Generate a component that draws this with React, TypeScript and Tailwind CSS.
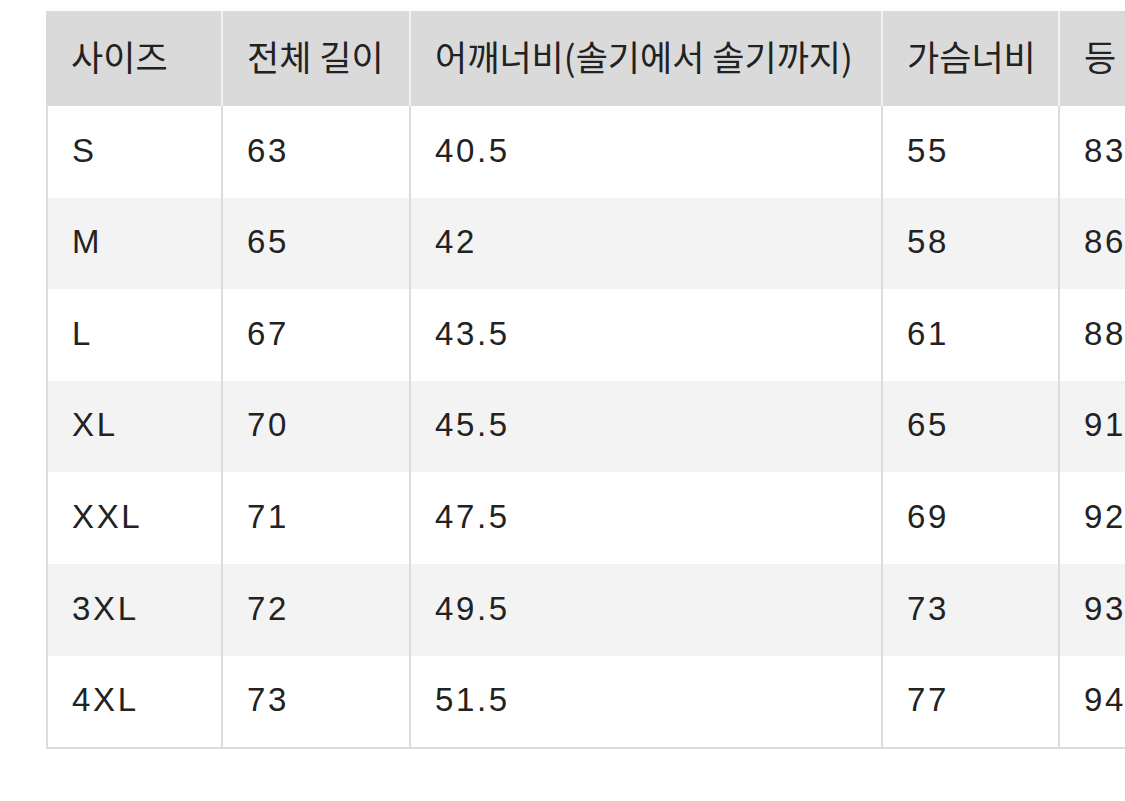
const headers = ['사이즈', '전체 길이', '어깨너비(솔기에서 솔기까지)', '가슴너비', '등'];

const rows = [
  ['S', '63', '40.5', '55', '83'],
  ['M', '65', '42', '58', '86'],
  ['L', '67', '43.5', '61', '88'],
  ['XL', '70', '45.5', '65', '91'],
  ['XXL', '71', '47.5', '69', '92'],
  ['3XL', '72', '49.5', '73', '93'],
  ['4XL', '73', '51.5', '77', '94'],
];

const cols = 'grid grid-cols-[177px_188px_472px_177px_240px]';

export default function App() {
  return (
    <div className="w-[1125px] h-[801px] overflow-hidden bg-white font-['Liberation_Sans','Noto_Sans_CJK_KR',sans-serif] text-[#222]">
      <div className="ml-[46px] mt-[11px] w-[1254px]">
        {/* header */}
        <div className={`${cols} h-[95px] bg-[#dadada]`}>
          {headers.map((h, i) => (
            <div
              key={h}
              className={`flex items-center pb-[4px] border-r-2 border-[#f2f2f2] whitespace-nowrap font-['Noto_Sans_CJK_KR',sans-serif] text-[35px] ${i === 0 ? 'pl-[25px]' : 'pl-6'}`}
            >
              {h}
            </div>
          ))}
        </div>

        {/* body */}
        <div className="border-b-2 border-[#dcdcdc]">
          {rows.map((r, ri) => (
            <div
              key={r[0]}
              className={`${cols} h-[91.6px] ${ri % 2 === 1 ? 'bg-[#f3f3f3]' : 'bg-white'}`}
            >
              {r.map((c, ci) => (
                <div
                  key={ci}
                  className={`flex items-center pb-[3px] border-r-2 border-[#dcdcdc] text-[33px] tracking-[0.08em] ${ci === 0 ? 'border-l-2 pl-6' : 'pl-6'}`}
                >
                  {c}
                </div>
              ))}
            </div>
          ))}
        </div>
      </div>
    </div>
  );
}
